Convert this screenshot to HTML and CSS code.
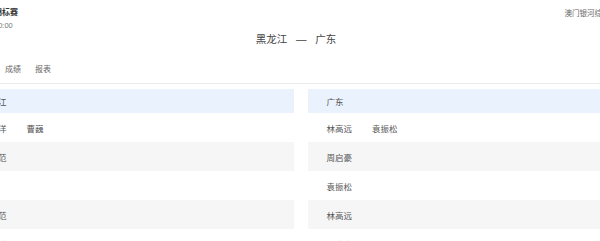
FILE: index.html
```html
<!DOCTYPE html>
<html lang="zh-CN">
<head>
    <meta charset="UTF-8">
    <meta name="viewport" content="width=device-width, initial-scale=1.0">
    <title>对阵详情</title>
    <link rel="stylesheet" href="styles.css">
</head>
<body>
    <div class="page">
        <!-- Match header -->
        <div class="match-header">
            <div class="match-info">
                <div class="match-title">锦标赛</div>
                <div class="match-time">10:00</div>
            </div>
            <div class="match-teams">黑龙江 &nbsp; — &nbsp; 广东</div>
            <div class="match-venue">澳门银河综艺馆</div>
        </div>

        <!-- Tabs -->
        <div class="tabs">
            <span class="tab">对阵</span>
            <span class="tab">成绩</span>
            <span class="tab">报表</span>
        </div>

        <!-- Line-ups -->
        <div class="lineups">
            <div class="team">
                <div class="row head"><span class="name">黑龙江</span></div>
                <div class="row"><span class="name">于子洋</span><span class="name">曹巍</span></div>
                <div class="row alt"><span class="name">王楚范</span></div>
                <div class="row"><span class="name">曹巍</span></div>
                <div class="row alt"><span class="name">王楚范</span></div>
                <div class="row"><span class="name">于子洋</span></div>
            </div>
            <div class="team">
                <div class="row head"><span class="name">广东</span></div>
                <div class="row"><span class="name">林高远</span><span class="name">袁振松</span></div>
                <div class="row alt"><span class="name">周启豪</span></div>
                <div class="row"><span class="name">袁振松</span></div>
                <div class="row alt"><span class="name">林高远</span></div>
                <div class="row"><span class="name">周启豪</span></div>
            </div>
        </div>
    </div>
</body>
</html>
```

FILE: styles.css
```css
* {
    margin: 0;
    padding: 0;
    box-sizing: border-box;
    font-family: 'Liberation Sans', 'Noto Sans CJK SC', sans-serif;
}

body {
    background-color: #fff;
    overflow: hidden;
}

.page {
    width: 680px;
    margin-left: -40px;
}

.match-header {
    display: grid;
    grid-template-columns: 1fr auto 1fr;
    align-items: start;
    padding: 8px 23px 0 34px;
}

.match-title {
    font-size: 8px;
    line-height: 10px;
    font-weight: bold;
    color: #333;
}

.match-time {
    margin-top: 3px;
    font-size: 7.5px;
    line-height: 10px;
    color: #777;
}

.match-teams {
    margin: 25px 19px 0 0;
    font-size: 10.5px;
    line-height: 12px;
    color: #444;
}

.match-venue {
    justify-self: end;
    margin-top: 1px;
    font-size: 7.5px;
    line-height: 9px;
    color: #666;
}

.tabs {
    display: flex;
    gap: 14px;
    margin-top: 19px;
    padding: 0 0 7px 15px;
    border-bottom: 1px solid #ebebeb;
}

.tab {
    font-size: 8px;
    line-height: 12px;
    color: #666;
}

.lineups {
    display: grid;
    grid-template-columns: 1fr 1fr;
    gap: 14px;
    margin-top: 5px;
    padding: 0 1px 0 2px;
}

.row {
    display: flex;
    align-items: center;
    height: 29px;
    padding-left: 19px;
}

.row.head {
    height: 24px;
    background-color: #eaf2fe;
}

.row.alt {
    background-color: #f6f6f6;
}

.name {
    font-size: 8.5px;
    color: #555;
    margin-right: 20px;
}
```
